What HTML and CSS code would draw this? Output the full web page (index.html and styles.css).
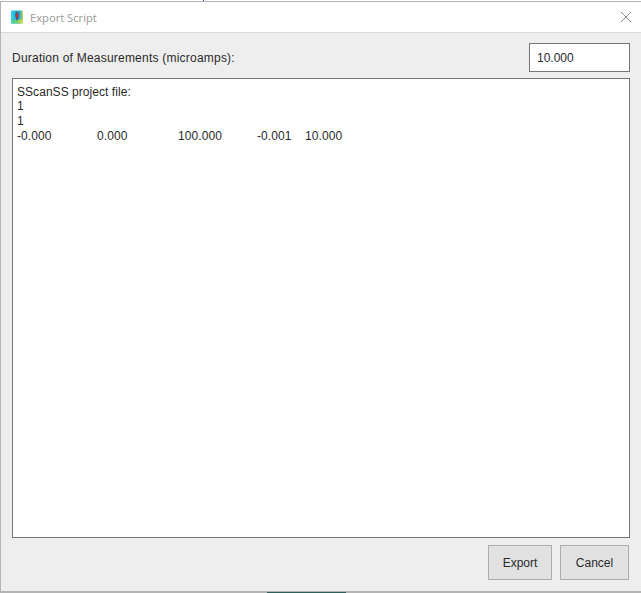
FILE: index.html
```html
<!DOCTYPE html>
<html lang="en">
<head>
    <meta charset="UTF-8">
    <title>Export Script</title>
    <link rel="stylesheet" href="styles.css">
</head>
<body>
<div class="screen-top"><span class="top-tick"></span></div>
<div class="window">
    <div class="title-bar">
        <svg class="app-icon" width="14" height="14" viewBox="0 0 14 14">
            <defs>
                <linearGradient id="heat" x1="0" y1="0" x2="1" y2="0">
                    <stop offset="0" stop-color="#30d8e8"/>
                    <stop offset="0.3" stop-color="#28b8e0"/>
                    <stop offset="0.7" stop-color="#20a8c8"/>
                    <stop offset="1" stop-color="#c8d850"/>
                </linearGradient>
                <linearGradient id="heat-low" x1="0" y1="0" x2="1" y2="0">
                    <stop offset="0" stop-color="#40d0b0"/>
                    <stop offset="0.5" stop-color="#70d070"/>
                    <stop offset="1" stop-color="#e0e050"/>
                </linearGradient>
            </defs>
            <rect x="1" y="0.5" width="12" height="13" rx="1" fill="url(#heat)"/>
            <rect x="1" y="9.5" width="12" height="4" rx="1" fill="url(#heat-low)"/>
            <path d="M7 1.5 C9 3 9 6 8 8 L7.4 10.5 L6.6 10.5 L6 8 C5 6 5 3 7 1.5 Z" fill="#30507a"/>
            <path d="M7 2.5 C8.4 4 8.2 6 7 9.5 C5.8 6 5.6 4 7 2.5 Z" fill="#d83428"/>
        </svg>
        <span class="title-text">Export Script</span>
        <svg class="close-icon" width="12" height="12" viewBox="0 0 12 12">
            <path d="M1 1 L11 11 M11 1 L1 11" stroke="#8a8a8a" stroke-width="1" fill="none"/>
        </svg>
    </div>
    <div class="content">
        <div class="duration-row">
            <label class="duration-label">Duration of Measurements (microamps):</label>
            <input class="duration-input" type="text" value="10.000">
        </div>
        <div class="script-box">
            <div class="script-first">SScanSS project file:</div>
            <div>1</div>
            <div>1</div>
            <div class="script-values">
                <span>-0.000</span>
                <span>0.000</span>
                <span>100.000</span>
                <span>-0.001</span>
                <span>10.000</span>
            </div>
        </div>
        <div class="button-container">
            <button class="action-button">Export</button>
            <button class="action-button cancel-button">Cancel</button>
        </div>
    </div>
</div>
<div class="screen-bottom"><span class="bottom-tab"></span></div>
</body>
</html>
```

FILE: styles.css
```css
html, body {
    margin: 0;
    padding: 0;
    height: 593px;
    overflow: hidden;
    background: #fff;
}
body {
    display: flex;
    flex-direction: column;
    font-family: "Liberation Sans", Arial, sans-serif;
    font-size: 12px;
    color: #2a2a2a;
}
.screen-top {
    height: 1px;
    display: flex;
    background: #fff;
}
.top-tick {
    width: 1px;
    height: 1px;
    margin-left: 203px;
    background: #1a3fa0;
}
.window {
    flex: 1;
    min-height: 0;
    display: flex;
    flex-direction: column;
    border-top: 1px solid #b4b4b4;
    border-left: 1px solid #b4b4b4;
    border-bottom: 1px solid #b4b4b4;
}
.title-bar {
    height: 30px;
    display: flex;
    align-items: center;
    background: #fff;
    border-bottom: 1px solid #d8d8d8;
}
.app-icon {
    margin-left: 9px;
}
.title-text {
    margin-left: 6px;
    color: #999;
    font-family: "Open Sans", sans-serif;
    font-size: 11.2px;
}
.close-icon {
    margin-left: auto;
    margin-right: 9px;
}
.content {
    flex: 1;
    min-height: 0;
    display: flex;
    flex-direction: column;
    background: #eee;
    padding: 10px 11px 11px 11px;
}
.duration-row {
    display: flex;
    justify-content: space-between;
    align-items: center;
    height: 29px;
    margin-bottom: 6px;
}
.duration-label {
    letter-spacing: 0.22px;
}
.duration-input {
    width: 101px;
    height: 29px;
    padding: 0 7px;
    box-sizing: border-box;
    border: 1px solid #767676;
    border-radius: 0;
    outline: none;
    background: #fff;
    font: inherit;
    color: #2a2a2a;
}
.script-box {
    flex: 1;
    min-height: 0;
    box-sizing: border-box;
    padding: 5px 4px;
    background: #fff;
    border: 1px solid #767676;
    line-height: 15px;
}
.script-first {
    padding-top: 1px;
    line-height: 14px;
    letter-spacing: 0.05px;
}
.script-values {
    display: grid;
    grid-template-columns: 80px 81px 79px 48px auto;
    letter-spacing: 0.1px;
}
.button-container {
    display: flex;
    justify-content: flex-end;
    gap: 8px;
    margin-top: 7px;
    padding-right: 1px;
}
.action-button {
    width: 64px;
    height: 35px;
    padding: 0;
    background: #e1e1e1;
    border: 1px solid #adadad;
    border-radius: 0;
    font: inherit;
    color: #2a2a2a;
}
.cancel-button {
    width: 69px;
}
.screen-bottom {
    height: 1px;
    display: flex;
    background: #b4b4b4;
}
.bottom-tab {
    width: 79px;
    height: 1px;
    margin-left: 267px;
    background: #2f5d5a;
}
```
